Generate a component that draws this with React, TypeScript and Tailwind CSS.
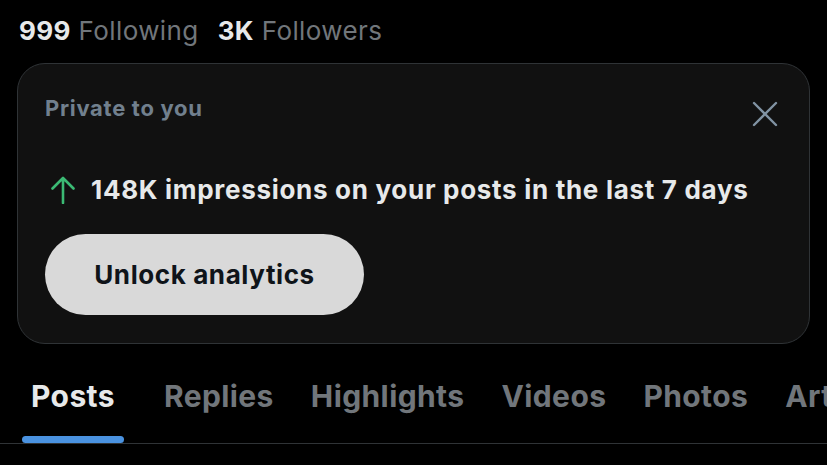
const tabs = ['Posts', 'Replies', 'Highlights', 'Videos', 'Photos', 'Articles'];

export default function App() {
  return (
    <div
      className="w-[827px] h-[465px] overflow-hidden bg-black text-[#e7e9ea]"
      style={{ fontFamily: 'Inter, "Noto Sans", sans-serif' }}
    >
      <div className="flex items-center gap-[19px] pl-[19px] pt-[14px] text-[26px] leading-[34px] tracking-[0.4px]">
        <div>
          <span className="font-bold text-[#e7e9ea]">999</span>
          <span className="text-[#71767b]"> Following</span>
        </div>
        <div>
          <span className="font-bold text-[#e7e9ea]">3K</span>
          <span className="text-[#71767b]"> Followers</span>
        </div>
      </div>

      <div className="mx-[17px] mt-[15px] h-[281px] rounded-[28px] border border-[#2f3336] bg-[#111111] pl-[27px] pr-[31px] pt-[28px]">
        <div className="flex items-start justify-between">
          <div className="text-[22px] font-bold leading-[32px] tracking-[0.7px] text-[#71808e]">Private to you</div>
          <svg className="mt-[9px] h-[26px] w-[26px]" viewBox="0 0 26 26" fill="none" stroke="#8193a3" strokeWidth="2.4" strokeLinecap="round">
            <path d="M2 2 L24 24 M24 2 L2 24" />
          </svg>
        </div>
        <div className="mt-[46px] flex items-center gap-[16px] pl-[6px] text-[26px] font-bold leading-[34px] tracking-[0.7px]">
          <svg className="h-[28px] w-[24px] shrink-0" viewBox="0 0 24 28" fill="none" stroke="#3bba74" strokeWidth="2.6" strokeLinecap="round" strokeLinejoin="round">
            <path d="M12 27 V2 M1.5 12.5 L12 2 L22.5 12.5" />
          </svg>
          <span>148K impressions on your posts in the last 7 days</span>
        </div>
        <button className="mt-[27px] flex h-[81px] w-[319px] items-center justify-center rounded-full bg-[#d9d9d9] text-[26px] font-bold tracking-[0.6px] text-[#0f1419]">
          Unlock analytics
        </button>
      </div>

      <div className="mt-[28px] flex gap-[19px] border-b border-[#2f3336] pl-[22px]">
        {tabs.map((t, i) => (
          <div key={t} className={`flex flex-col items-center ${i === 0 ? 'mr-[12px]' : ''}`}>
            <span
              className={`whitespace-nowrap px-[9px] text-[30px] font-bold leading-[48px] tracking-[0.4px] ${
                i === 0 ? 'text-[#e7e9ea]' : 'text-[#71767b]'
              }`}
            >
              {t}
            </span>
            <div className={`mt-[16px] h-[7px] w-full rounded-full ${i === 0 ? 'bg-[#4a92e0]' : 'bg-transparent'}`} />
          </div>
        ))}
      </div>
    </div>
  );
}
